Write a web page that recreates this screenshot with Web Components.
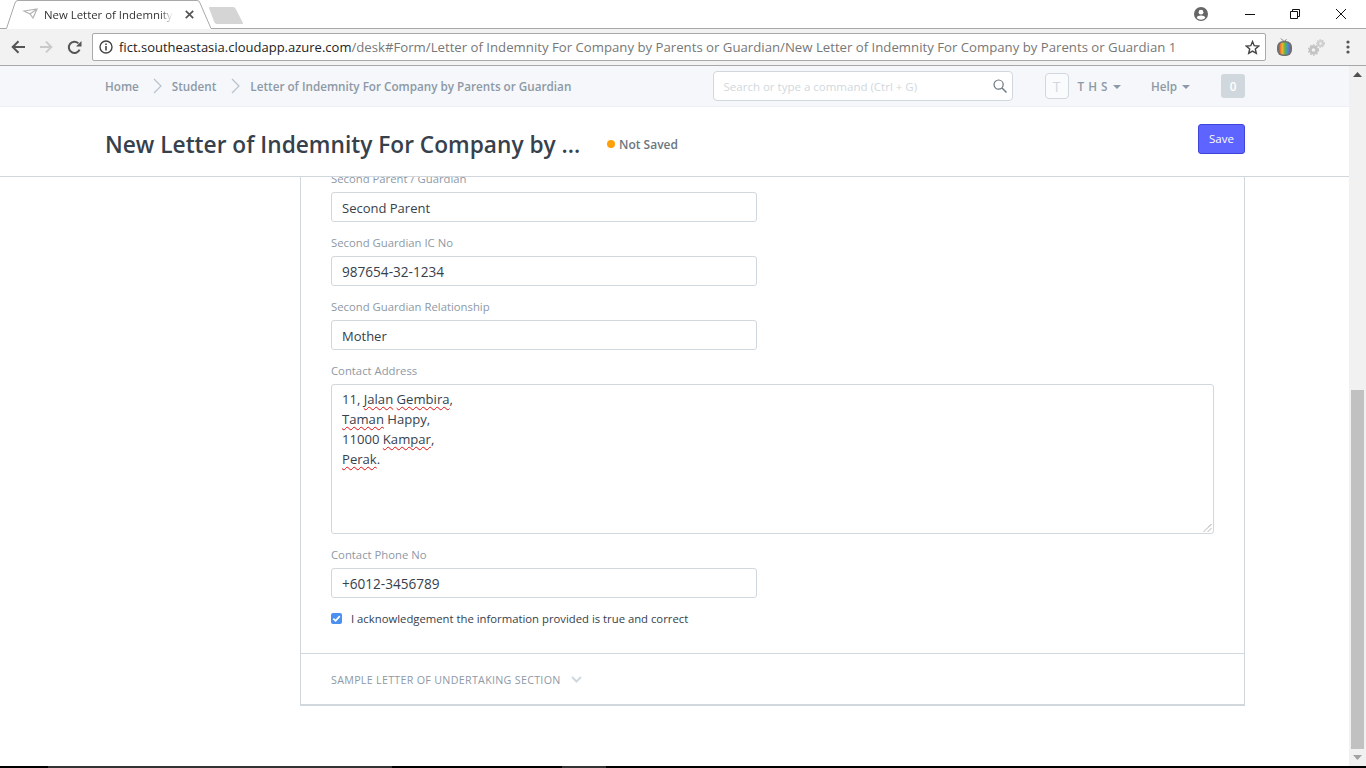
<!DOCTYPE html>
<html>
<head>
<meta charset="utf-8">
<title>New Letter of Indemnity</title>
<style>
  html, body { margin: 0; height: 100%; overflow: hidden; background: #fff; }
  body { display: flex; flex-direction: column; height: 768px; font-family: "Open Sans", "Noto Sans", sans-serif; }
</style>
</head>
<body>
<browser-tabs>New Letter of Indemnity</browser-tabs>
<browser-toolbar></browser-toolbar>
<desk-view>
  <desk-navbar slot="fixed"></desk-navbar>
  <page-head slot="fixed">New Letter of Indemnity For Company by ...</page-head>
  <form-card>
    <form-field label="Second Parent / Guardian">Second Parent</form-field>
    <form-field label="Second Guardian IC No" digits>987654-32-1234</form-field>
    <form-field label="Second Guardian Relationship">Mother</form-field>
    <form-field label="Contact Address" wide>11, <spell-err>Jalan</spell-err> <spell-err>Gembira</spell-err>,
<spell-err>Taman</spell-err> Happy,
11000 <spell-err>Kampar</spell-err>,
<spell-err>Perak</spell-err>.</form-field>
    <form-field label="Contact Phone No" digits>+6012-3456789</form-field>
    <form-check>I acknowledgement the information provided is true and correct</form-check>
    <section-head slot="footer">SAMPLE LETTER OF UNDERTAKING SECTION</section-head>
  </form-card>
</desk-view>
<task-strip></task-strip>

<script>
  class BrowserTabs extends HTMLElement {
    constructor() {
      super();
      this.attachShadow({ mode: "open" });
      this.shadowRoot.innerHTML = `
        <style>
          :host { display: flex; height: 29px; background: #fff; position: relative; flex: none; font-family: "Open Sans", sans-serif; }
          .shape { position: absolute; left: 0; top: 0; }
          .tab { display: flex; align-items: center; height: 29px; margin-left: 23px; width: 175px; position: relative; z-index: 1; }
          .title { margin-left: 21px; width: 129px; overflow: hidden; white-space: nowrap; font-size: 11.4px; color: #333; -webkit-mask-image: linear-gradient(90deg, #000 90%, transparent); mask-image: linear-gradient(90deg, #000 90%, transparent); }
          .close { margin-left: 12px; }
          .win { margin-left: auto; display: flex; align-items: center; position: relative; z-index: 1; padding-bottom: 2px; }
          .acct { margin-right: 37px; }
          .win svg { display: block; }
          .gap1 { margin-right: 35px; }
          .gap2 { margin-right: 36px; }
          .gap3 { margin-right: 20px; }
        </style>
        <svg class="shape" width="1366" height="29" viewBox="0 0 1366 29">
          <path d="M0 28.5H6.5L15 3Q15.7 .5 18 .5H197Q199.3 .5 200 3L211 28.5H1366" fill="#fff" stroke="#a8a8a8"/>
          <path d="M209 8Q208.5 7 210 7H233Q235 7 235.8 9L243 23Q243.5 24 242 24H217Q215 24 214.2 22Z" fill="#d5d5d5"/>
          <path d="M24 11L37 9L33 18L30 14L24 11ZM30 14L37 9" fill="none" stroke="#b4b4b4" stroke-width="1.2"/>
        </svg>
        <div class="tab">
          <div class="title"><slot></slot></div>
          <svg class="close" width="9" height="9" viewBox="0 0 9 9"><path d="M.8 .8L8.2 8.2M8.2 .8L.8 8.2" stroke="#555" stroke-width="1.7"/></svg>
        </div>
        <div class="win">
          <svg class="acct" width="14" height="14" viewBox="0 0 14 14"><circle cx="7" cy="7" r="7" fill="#666"/><circle cx="7" cy="5.2" r="2.4" fill="#fff"/><path d="M2.7 11Q3.4 8.6 7 8.6T11.3 11Q9.5 12.7 7 12.7T2.7 11Z" fill="#fff"/></svg>
          <svg class="gap1" width="10" height="10" viewBox="0 0 10 10"><path d="M0 5.5H10" stroke="#111"/></svg>
          <svg class="gap2" width="10" height="10" viewBox="0 0 10 10"><path d="M.5 2.5H7.5V9.5H.5ZM2.5 2.5V.5H9.5V7.5H7.5" fill="none" stroke="#111"/></svg>
          <svg class="gap3" width="10" height="10" viewBox="0 0 10 10"><path d="M0 0L10 10M10 0L0 10" stroke="#111"/></svg>
        </div>`;
    }
  }
  customElements.define("browser-tabs", BrowserTabs);

  class BrowserToolbar extends HTMLElement {
    constructor() {
      super();
      this.attachShadow({ mode: "open" });
      this.shadowRoot.innerHTML = `
        <style>
          :host { display: flex; align-items: center; height: 36px; background: #f2f2f2; border-bottom: 1px solid #a8a8a8; flex: none; padding-left: 11px; font-family: "Open Sans", sans-serif; }
          svg { display: block; flex: none; }
          .fwd { margin-left: 13px; }
          .reload { margin-left: 14px; }
          .omni { display: flex; align-items: center; margin-left: 10px; height: 28px; background: #fff; border: 1px solid #a9a9a9; border-radius: 2px; box-sizing: border-box; width: 1174px; }
          .info { margin-left: 6px; }
          .url { margin-left: 6px; font-size: 13px; white-space: nowrap; color: #777; flex: 1; overflow: hidden; }
          .url b { font-weight: 400; color: #222; }
          .url span { font-size: 13.2px; }
          .star { margin-right: 5px; }
          .tv { margin-left: 11px; }
          .gears { margin-left: 16px; }
          .dots { margin-left: 21px; }
        </style>
        <svg width="15" height="14" viewBox="0 0 15 14"><path d="M14 7H2M7.5 1.2L1.7 7L7.5 12.8" fill="none" stroke="#555" stroke-width="2"/></svg>
        <svg class="fwd" width="14" height="14" viewBox="0 0 15 14"><path d="M1 7H13M7.5 1.2L13.3 7L7.5 12.8" fill="none" stroke="#c9c9c9" stroke-width="2"/></svg>
        <svg class="reload" width="15" height="15" viewBox="0 0 15 15"><path d="M12.6 9.6A5.6 5.6 0 1 1 11.4 3.4" fill="none" stroke="#555" stroke-width="2"/><path d="M9 6.5H14.5V1Z" fill="#555"/></svg>
        <div class="omni">
          <svg class="info" width="14" height="14" viewBox="0 0 14 14"><circle cx="7" cy="7" r="6" fill="none" stroke="#444" stroke-width="1.4"/><path d="M7 6V10.4M7 3.4V5" stroke="#444" stroke-width="1.6"/></svg>
          <div class="url"><b>fict.southeastasia.cloudapp.azure.com</b><span>/desk#Form/Letter of Indemnity For Company by Parents or Guardian/New Letter of Indemnity For Company by Parents or Guardian 1</span></div>
          <svg class="star" width="15" height="15" viewBox="0 0 15 15"><path d="M7.5 1.6L9.2 5.7L13.7 6.1L10.3 9L11.3 13.4L7.5 11.1L3.7 13.4L4.7 9L1.3 6.1L5.8 5.7Z" fill="none" stroke="#444" stroke-width="1.4"/></svg>
        </div>
        <svg class="tv" width="15" height="18" viewBox="0 0 15 18">
          <defs><linearGradient id="rb"><stop offset="0" stop-color="#e8483a"/><stop offset=".3" stop-color="#f3b32e"/><stop offset=".55" stop-color="#58b947"/><stop offset=".8" stop-color="#3f8fe0"/><stop offset="1" stop-color="#8a4fc0"/></linearGradient></defs>
          <path d="M4 .5L7 3.5L9.5 1.5" fill="none" stroke="#777"/>
          <rect x="0" y="3" width="15" height="15" rx="6" fill="#6f6f6f"/>
          <rect x="2" y="4.5" width="11" height="12" rx="4.5" fill="url(#rb)"/>
        </svg>
        <svg class="gears" width="17" height="17" viewBox="0 0 17 17"><circle cx="5.5" cy="11" r="3.2" fill="none" stroke="#c4c4c4" stroke-width="3"/><circle cx="5.5" cy="11" r="5" fill="none" stroke="#c4c4c4" stroke-width="1.4" stroke-dasharray="1.6 1.6"/><circle cx="12.5" cy="4.5" r="2.4" fill="none" stroke="#cfcfcf" stroke-width="2.4"/><circle cx="12.5" cy="4.5" r="3.9" fill="none" stroke="#cfcfcf" stroke-width="1.2" stroke-dasharray="1.4 1.4"/></svg>
        <svg class="dots" width="4" height="14" viewBox="0 0 4 14"><circle cx="2" cy="2" r="1.6" fill="#555"/><circle cx="2" cy="7" r="1.6" fill="#555"/><circle cx="2" cy="12" r="1.6" fill="#555"/></svg>`;
    }
  }
  customElements.define("browser-toolbar", BrowserToolbar);

  class DeskView extends HTMLElement {
    constructor() {
      super();
      this.attachShadow({ mode: "open" });
      this.shadowRoot.innerHTML = `
        <style>
          :host { display: flex; flex: 1; min-height: 0; background: #fff; }
          .col { flex: 1; min-width: 0; display: flex; flex-direction: column; overflow: hidden; position: relative; }
          .fixed { flex: none; position: relative; z-index: 2; background: #fff; }
          .scroll { flex: 1; min-height: 0; overflow: hidden; padding-left: 300px; padding-right: 104px; }
          .bar { flex: none; width: 17px; background: #f1f1f1; display: flex; flex-direction: column; align-items: center; }
          .arrow { height: 17px; flex: none; display: flex; align-items: center; justify-content: center; }
          .track { flex: 1; width: 100%; display: flex; flex-direction: column; justify-content: flex-end; }
          .thumb { height: 359px; background: #c1c1c1; margin: 0 2px; }
        </style>
        <div class="col">
          <div class="fixed"><slot name="fixed"></slot></div>
          <div class="scroll"><slot></slot></div>
        </div>
        <div class="bar">
          <div class="arrow"><svg width="9" height="5" viewBox="0 0 9 5"><path d="M4.5 0L9 5H0Z" fill="#505050"/></svg></div>
          <div class="track"><div class="thumb"></div></div>
          <div class="arrow"><svg width="9" height="5" viewBox="0 0 9 5"><path d="M0 0H9L4.5 5Z" fill="#a3a3a3"/></svg></div>
        </div>`;
    }
  }
  customElements.define("desk-view", DeskView);

  class DeskNavbar extends HTMLElement {
    constructor() {
      super();
      this.attachShadow({ mode: "open" });
      this.shadowRoot.innerHTML = `
        <style>
          :host { display: flex; align-items: center; height: 40px; background: #f5f7fa; border-bottom: 1px solid #eef0f4; padding: 0 104px 0 105px; font-size: 11.7px; font-weight: 600; color: #8d99a6; }
          .crumb { white-space: nowrap; margin-top: -1px; }
          .sep { margin: 0 10px 0 14px; display: block; flex: none; }
          .sep.b { margin: 0 10px 0 15px; }
          .search { margin-left: auto; width: 300px; height: 30px; box-sizing: border-box; border: 1px solid #d1d8dd; border-radius: 4px; background: #fff; display: flex; align-items: center; padding: 0 5px 0 10px; font-size: 11.5px; font-weight: 400; color: #d1d8dd; }
          .search span { flex: 1; }
          .avatar { margin-left: 32px; width: 24px; height: 26px; box-sizing: border-box; border: 1px solid #d1d8dd; border-radius: 4px; background: #fafbfc; display: flex; align-items: center; justify-content: center; font-size: 14px; font-weight: 400; color: #d1d8dd; }
          .user { margin-left: 9px; letter-spacing: .5px; white-space: nowrap; margin-top: -1px; }
          .caret { display: inline-block; width: 0; height: 0; border: 4px solid transparent; border-top-color: #8d99a6; border-bottom: 0; margin-left: 5px; vertical-align: 2px; }
          .help { margin-left: 30px; white-space: nowrap; margin-top: -1px; }
          .badge { margin-left: 31px; width: 24px; height: 24px; border-radius: 3px; background: #d1d8dd; color: #fff; display: flex; align-items: center; justify-content: center; }
        </style>
        <span class="crumb">Home</span>
        <svg class="sep" width="9" height="16" viewBox="0 0 9 16"><path d="M1 1L8 8L1 15" fill="none" stroke="#b8c2cc" stroke-width="1.2"/></svg>
        <span class="crumb">Student</span>
        <svg class="sep b" width="9" height="16" viewBox="0 0 9 16"><path d="M1 1L8 8L1 15" fill="none" stroke="#b8c2cc" stroke-width="1.2"/></svg>
        <span class="crumb">Letter of Indemnity For Company by Parents or Guardian</span>
        <div class="search"><span>Search or type a command (Ctrl + G)</span>
          <svg width="14" height="14" viewBox="0 0 14 14"><circle cx="5.6" cy="5.6" r="4.6" fill="none" stroke="#6c7680" stroke-width="1.2"/><path d="M9 9L13.5 13.5" stroke="#6c7680" stroke-width="1.4"/></svg>
        </div>
        <div class="avatar">T</div>
        <span class="user">T H S<i class="caret"></i></span>
        <span class="help">Help<i class="caret"></i></span>
        <div class="badge">0</div>`;
    }
  }
  customElements.define("desk-navbar", DeskNavbar);

  class PageHead extends HTMLElement {
    constructor() {
      super();
      this.attachShadow({ mode: "open" });
      this.shadowRoot.innerHTML = `
        <style>
          :host { display: flex; align-items: center; height: 70px; box-sizing: border-box; background: #fff; border-bottom: 1px solid #d1d8dd; padding: 0 104px 0 105px; }
          h1 { margin: 8px 0 0; font-size: 22.7px; font-weight: 600; color: #36414c; white-space: nowrap; line-height: 1; width: 502px; }
          .dot { width: 8px; height: 8px; border-radius: 50%; background: #ffa00a; flex: none; margin-top: 4px; }
          .status { margin-left: 4px; font-size: 12px; font-weight: 600; color: #6c7680; margin-top: 5px; }
          button { margin-left: auto; height: 30px; width: 47px; padding: 0; border: 1px solid #3e44d8; border-radius: 3px; background: #5e64ff; color: #fff; font: 400 11.5px "Open Sans", sans-serif; margin-top: -6px; }
        </style>
        <h1><slot></slot></h1>
        <span class="dot"></span>
        <span class="status">Not Saved</span>
        <button>Save</button>`;
    }
  }
  customElements.define("page-head", PageHead);

  class FormCard extends HTMLElement {
    constructor() {
      super();
      this.attachShadow({ mode: "open" });
      this.shadowRoot.innerHTML = `
        <style>
          :host { display: block; margin-top: -3px; padding: 0 30px; border: 1px solid #d1d8dd; border-bottom-width: 2px; border-top: 0; box-sizing: border-box; height: 532px; background: #fff; position: relative; }
          .body { display: flex; flex-direction: column; }
          .foot { margin: 0 -30px; }
        </style>
        <div class="body"><slot></slot></div>
        <div class="foot"><slot name="footer"></slot></div>`;
    }
  }
  customElements.define("form-card", FormCard);

  // no whitespace around the slot here: it sits inside a white-space: pre box
  class SpellErr extends HTMLElement {
    constructor() {
      super();
      this.attachShadow({ mode: "open" });
      this.shadowRoot.innerHTML = `<style>:host { display: inline; text-decoration: underline wavy #e01010 1px; text-underline-offset: 2px; text-decoration-skip-ink: none; }</style><slot></slot>`;
    }
  }
  customElements.define("spell-err", SpellErr);

  class FormField extends HTMLElement {
    constructor() {
      super();
      this.attachShadow({ mode: "open" });
    }
    connectedCallback() {
      const wide = this.hasAttribute("wide");
      const size = this.hasAttribute("digits") ? "13.6px" : "13px";
      this.shadowRoot.innerHTML = `
        <style>
          :host { display: block; margin-bottom: 16px; }
          label { display: block; font-size: 11.3px; line-height: 10px; height: 18px; color: #8d99a6; white-space: nowrap; }
          .ctl { box-sizing: border-box; width: 426px; height: 30px; border: 1px solid #d1d8dd; border-radius: 3px; padding: 0 10px; font-size: ${size}; line-height: 30px; color: #36414c; background: #fff; white-space: nowrap; }
          .ctl.area { width: 883px; height: 150px; font-size: 13.1px; line-height: 20px; padding-top: 4px; white-space: pre; position: relative; }
          .grip { position: absolute; right: 1px; bottom: 1px; display: block; }
        </style>
        <label>${this.getAttribute("label")}</label>
        <div class="ctl${wide ? " area" : ""}"><slot></slot>${wide ? `<svg class="grip" width="9" height="9" viewBox="0 0 9 9"><path d="M1 8.5L8.5 1M5 8.5L8.5 5" stroke="#777" stroke-dasharray="1 .6"/></svg>` : ""}</div>`;
    }
  }
  customElements.define("form-field", FormField);

  class FormCheck extends HTMLElement {
    constructor() {
      super();
      this.attachShadow({ mode: "open" });
      this.shadowRoot.innerHTML = `
        <style>
          :host { display: flex; align-items: center; height: 18px; margin-top: -5px; font-size: 11.3px; color: #36414c; white-space: nowrap; }
          .box { width: 11px; height: 11px; border-radius: 2px; background: #4a90f0; display: flex; margin-right: 9px; flex: none; }
          svg { display: block; }
        </style>
        <span class="box"><svg width="11" height="11" viewBox="0 0 11 11"><path d="M2.3 5.6L4.6 7.8L8.8 3.2" fill="none" stroke="#fff" stroke-width="1.8"/></svg></span>
        <span><slot></slot></span>`;
    }
  }
  customElements.define("form-check", FormCheck);

  class SectionHead extends HTMLElement {
    constructor() {
      super();
      this.attachShadow({ mode: "open" });
      this.shadowRoot.innerHTML = `
        <style>
          :host { display: flex; align-items: center; margin-top: 26px; height: 51px; border-top: 1px solid #d1d8dd; padding-left: 30px; font-size: 10.7px; letter-spacing: .3px; color: #8d99a6; white-space: nowrap; }
          svg { margin-left: 10px; display: block; }
        </style>
        <slot></slot>
        <svg width="11" height="7" viewBox="0 0 11 7"><path d="M1 1L5.5 5.5L10 1" fill="none" stroke="#d1d8dd" stroke-width="2"/></svg>`;
    }
  }
  customElements.define("section-head", SectionHead);

  class TaskStrip extends HTMLElement {
    constructor() {
      super();
      this.attachShadow({ mode: "open" });
      this.shadowRoot.innerHTML = `
        <style>
          :host { display: flex; height: 2px; background: #000; flex: none; padding-left: 48px; }
          .seg { background: #333; height: 2px; }
          .a { width: 344px; }
          .b { width: 44px; margin-left: 170px; }
        </style>
        <div class="seg a"></div><div class="seg b"></div>`;
    }
  }
  customElements.define("task-strip", TaskStrip);
</script>
</body>
</html>
